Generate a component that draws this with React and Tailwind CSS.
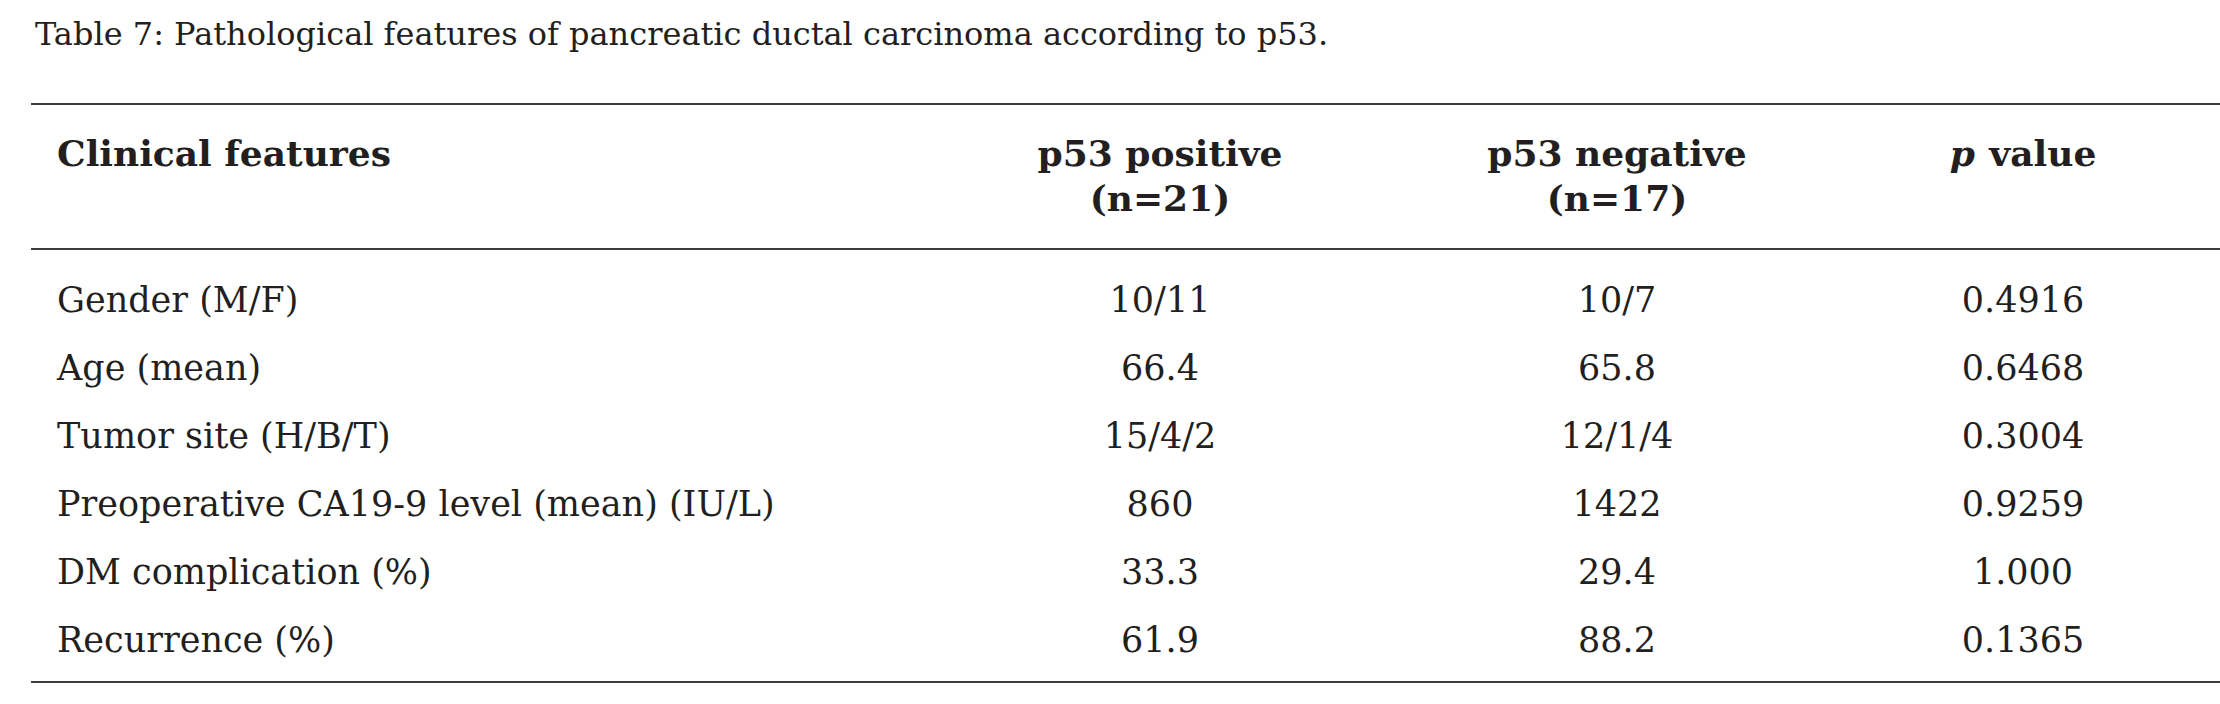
const rows = [
  ["Gender (M/F)", "10/11", "10/7", "0.4916"],
  ["Age (mean)", "66.4", "65.8", "0.6468"],
  ["Tumor site (H/B/T)", "15/4/2", "12/1/4", "0.3004"],
  ["Preoperative CA19-9 level (mean) (IU/L)", "860", "1422", "0.9259"],
  ["DM complication (%)", "33.3", "29.4", "1.000"],
  ["Recurrence (%)", "61.9", "88.2", "0.1365"],
];

const cols = "grid grid-cols-[900px_458px_456px_356px_1fr]";

const App = () => {
  return (
    <div className="bg-white w-[2220px] h-[704px] overflow-hidden text-[#231f20] font-['DejaVu_Serif',serif] text-[32px]">
      <div className="pl-[35px] pt-[10px] leading-[48px]">
        Table 7: Pathological features of pancreatic ductal carcinoma according to p53.
      </div>

      <div className="ml-[31px] mt-[45px]">
        <div className="h-[2px] bg-[#3d3d3d]" />

        {/* header */}
        <div className={`${cols} text-[36px] font-bold leading-[45px] pt-[26px] h-[143px]`}>
          <div className="pl-[26px]">Clinical features</div>
          <div className="text-center">
            p53 positive
            <br />
            (n=21)
          </div>
          <div className="text-center">
            p53 negative
            <br />
            (n=17)
          </div>
          <div className="text-center">
            <i className="tracking-[2px]">p</i> value
          </div>
          <div />
        </div>

        <div className="h-[2px] bg-[#3d3d3d]" />

        {/* body */}
        <div className="pt-[16px] pb-[7px] text-[35px]">
          {rows.map((r) => (
            <div key={r[0]} className={`${cols} leading-[68px]`}>
              <div className="pl-[26px]">{r[0]}</div>
              <div className="text-center">{r[1]}</div>
              <div className="text-center">{r[2]}</div>
              <div className="text-center">{r[3]}</div>
              <div />
            </div>
          ))}
        </div>

        <div className="h-[2px] bg-[#3d3d3d]" />
      </div>
    </div>
  );
};

export default App;
